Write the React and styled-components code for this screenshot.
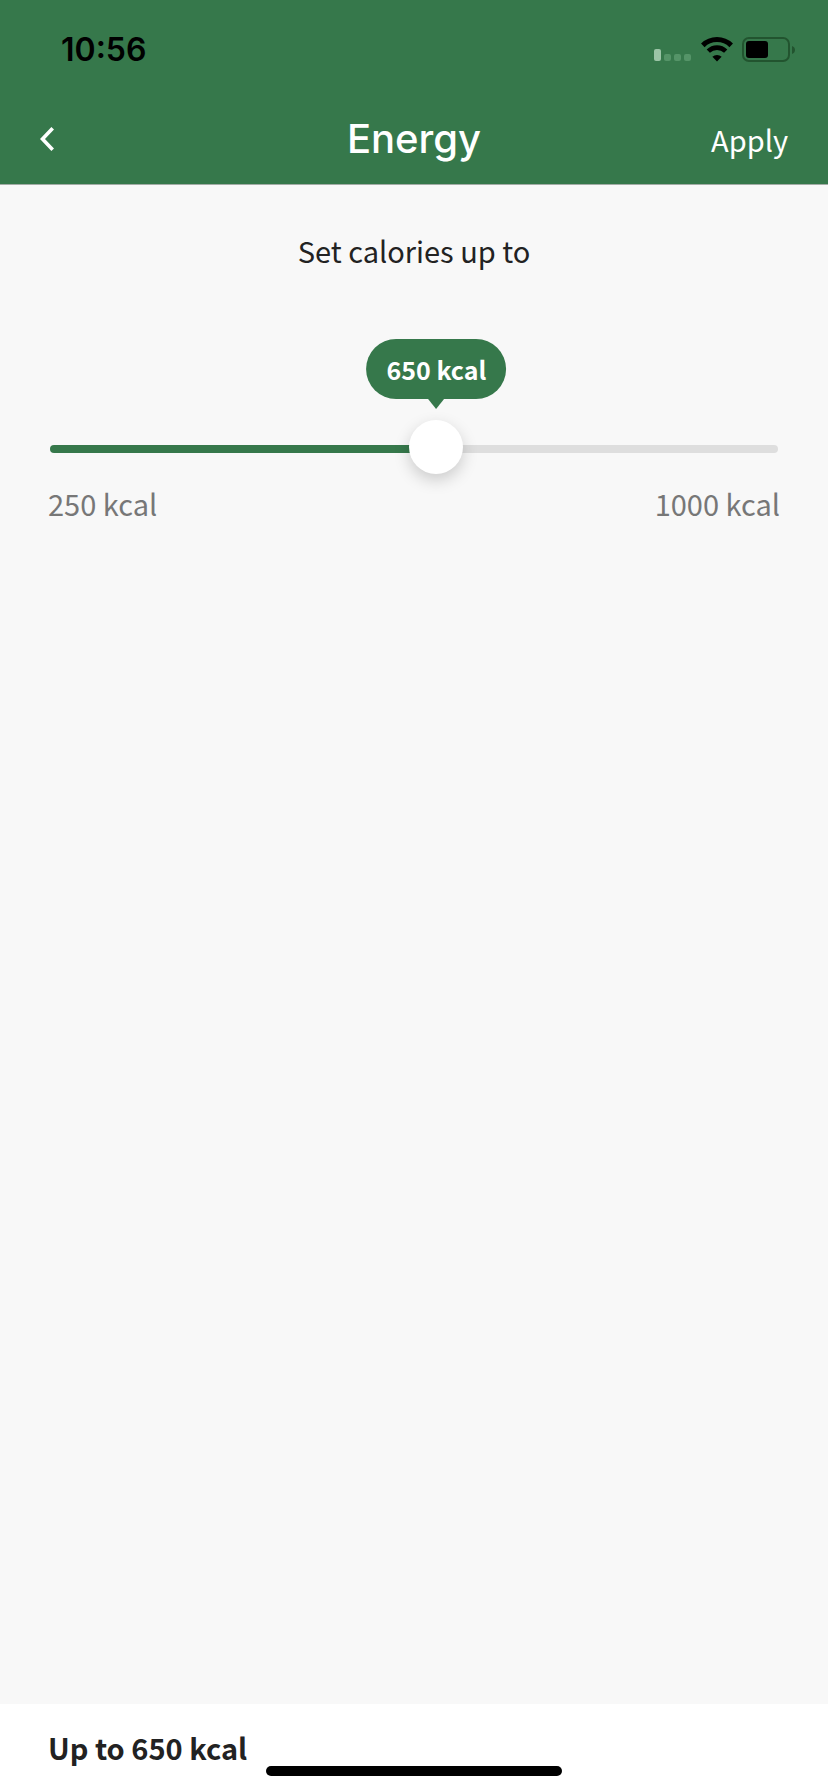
import React, { useState } from "react";
import styled, { createGlobalStyle } from "styled-components";

const MIN = 250;
const MAX = 1000;
const THUMB = 54;

const color = {
  green: "#36784b",
  page: "#f8f8f8",
  ink: "#222222",
  muted: "#777777",
  track: "#dedede",
};

const GlobalStyle = createGlobalStyle`
  *, *::before, *::after { box-sizing: border-box; }
  body {
    margin: 0;
    background: ${color.page};
    color: ${color.ink};
    font-family: "Noto Sans CJK SC", "Noto Sans", sans-serif;
    font-size: 29px;
    line-height: 40px;
  }
  button { border: 0; padding: 0; background: none; color: inherit; font: inherit; cursor: pointer; }
`;

const Screen = styled.div`
  min-height: 100vh;
  display: flex;
  flex-direction: column;
`;

const Header = styled.header`
  background: ${color.green};
  border-bottom: 1px solid #a3aca6;
`;

const StatusBar = styled.div`
  display: flex;
  justify-content: space-between;
  align-items: center;
  height: 100px;
  padding: 0 33px 0 61px;
  color: #000;
`;

const Clock = styled.time`
  font-family: Inter, sans-serif;
  font-size: 32px;
  font-weight: 600;
`;

const StatusIcons = styled.div`
  display: flex;
  align-items: center;
  gap: 9px;
`;

const NavBar = styled.div`
  display: grid;
  grid-template-columns: 1fr auto 1fr;
  align-items: center;
  height: 84px;
  padding: 0 40px 6px;
  color: #fff;
`;

const BackButton = styled.button`
  display: flex;
  justify-self: start;
`;

const Title = styled.h1`
  margin: 0;
  font-family: Inter, sans-serif;
  font-size: 40px;
  font-weight: 500;
  line-height: 48px;
`;

const ApplyButton = styled.button`
  justify-self: end;
`;

const Main = styled.main`
  flex: 1;
  display: flex;
  flex-direction: column;
  padding: 45px 48px;
`;

const Prompt = styled.label`
  text-align: center;
`;

const SliderArea = styled.div`
  position: relative;
  margin: 152px 2px 7px;
`;

const Range = styled.input`
  appearance: none;
  display: block;
  width: 100%;
  height: ${THUMB}px;
  margin: 0;
  background: none;
  cursor: pointer;

  &::-webkit-slider-runnable-track {
    height: 8px;
    border-radius: 4px;
    background: linear-gradient(to right, ${color.green} var(--fill), ${color.track} var(--fill));
  }
  &::-webkit-slider-thumb {
    appearance: none;
    width: ${THUMB}px;
    height: ${THUMB}px;
    margin-top: -25px;
    border-radius: 50%;
    background: #fff;
    box-shadow: 0 6px 16px rgba(0, 0, 0, 0.18);
  }
`;

const Bubble = styled.output`
  position: absolute;
  bottom: 77px;
  transform: translateX(-50%);
  padding: 0 20px;
  border-radius: 30px;
  background: ${color.green};
  color: #fff;
  font-size: 25px;
  font-weight: 700;
  line-height: 60px;
  white-space: nowrap;

  &::after {
    content: "";
    position: absolute;
    top: 100%;
    left: 50%;
    margin-left: -8px;
    border: solid transparent;
    border-width: 10px 8px 0;
    border-top-color: ${color.green};
  }
`;

const Limits = styled.div`
  display: flex;
  justify-content: space-between;
  color: ${color.muted};
`;

const Footer = styled.footer`
  position: relative;
  padding: 23px 48px 25px;
  background: #fff;
  font-weight: 700;
`;

const HomeIndicator = styled.div`
  position: absolute;
  left: 50%;
  bottom: 16px;
  width: 296px;
  height: 10px;
  transform: translateX(-50%);
  border-radius: 5px;
  background: #000;
`;

function SignalIcon() {
  return (
    <svg width="38" height="26" viewBox="0 0 38 26" aria-hidden="true">
      <rect x="0" y="12" width="7" height="12" rx="2" fill="#9bc4a6" />
      {[10, 20, 30].map((x) => (
        <rect key={x} x={x} y="17" width="7" height="7" rx="2" fill="#559468" />
      ))}
    </svg>
  );
}

function WifiIcon() {
  return (
    <svg width="32" height="26" viewBox="0 0 32 26" fill="none" stroke="#000" aria-hidden="true">
      <path d="M1.8 8.4a20.2 20.2 0 0 1 28.4 0" strokeWidth="5" />
      <path d="M7.3 14.2a12.4 12.4 0 0 1 17.4 0" strokeWidth="4.6" />
      <path d="M16 24.4l-4.6-4.6a6.6 6.6 0 0 1 9.2 0z" fill="#000" stroke="none" />
    </svg>
  );
}

function BatteryIcon() {
  return (
    <svg width="53" height="26" viewBox="0 0 53 26" aria-hidden="true">
      <rect x="1" y="1" width="46" height="23" rx="6" fill="none" stroke="#22542f" strokeWidth="2" />
      <rect x="4" y="4" width="22" height="17" rx="3" fill="#000" />
      <path d="M50 9c4 1.300 4 6.700 0 8z" fill="#22542f" />
    </svg>
  );
}

function BackIcon() {
  return (
    <svg width="15" height="24" viewBox="0 0 15 24" fill="none" stroke="#fff" strokeWidth="3.6" aria-hidden="true">
      <path d="M12.700 1.300L2.500 12l10.200 10.700" />
    </svg>
  );
}

export default function App() {
  const [kcal, setKcal] = useState(650);
  const ratio = (kcal - MIN) / (MAX - MIN);
  const position = `calc(${ratio * 100}% + ${(0.5 - ratio) * THUMB}px)`;

  return (
    <Screen>
      <GlobalStyle />
      <Header>
        <StatusBar>
          <Clock>10:56</Clock>
          <StatusIcons>
            <SignalIcon />
            <WifiIcon />
            <BatteryIcon />
          </StatusIcons>
        </StatusBar>
        <NavBar>
          <BackButton type="button" aria-label="Back">
            <BackIcon />
          </BackButton>
          <Title>Energy</Title>
          <ApplyButton type="button">Apply</ApplyButton>
        </NavBar>
      </Header>
      <Main>
        <Prompt htmlFor="calories">Set calories up to</Prompt>
        <SliderArea>
          <Bubble htmlFor="calories" style={{ left: position }}>
            {kcal} kcal
          </Bubble>
          <Range
            id="calories"
            type="range"
            min={MIN}
            max={MAX}
            step={10}
            value={kcal}
            onChange={(e) => setKcal(Number(e.target.value))}
            style={{ "--fill": position }}
          />
        </SliderArea>
        <Limits>
          <span>{MIN} kcal</span>
          <span>{MAX} kcal</span>
        </Limits>
      </Main>
      <Footer>
        Up to {kcal} kcal
        <HomeIndicator />
      </Footer>
    </Screen>
  );
}
